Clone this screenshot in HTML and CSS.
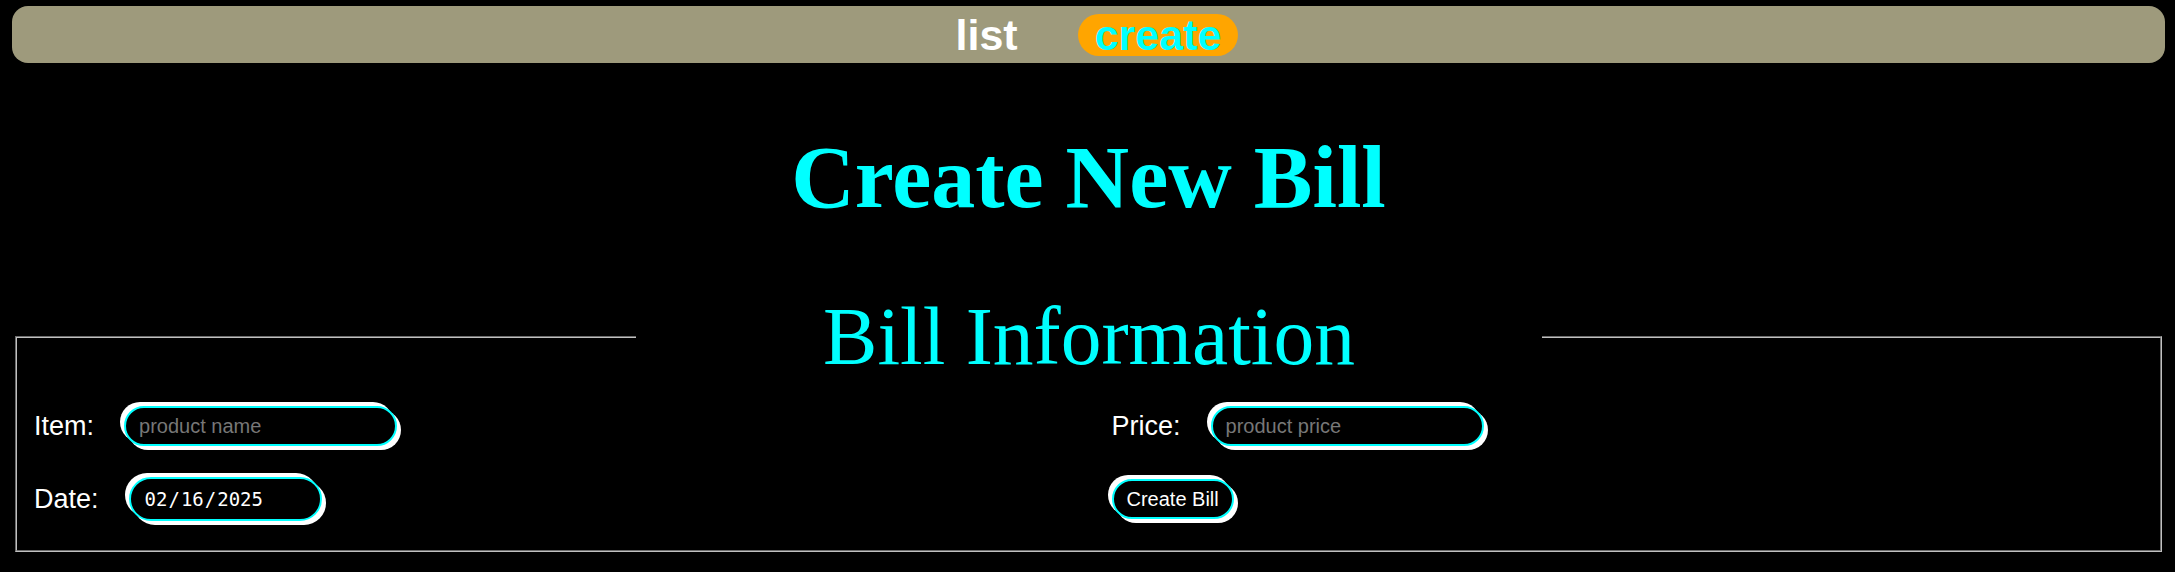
FILE: index.html
```html
<!DOCTYPE html>
<html lang="en">
<head>
<meta charset="utf-8">
<title>Create New Bill</title>
<link rel="stylesheet" href="styles.css">
</head>
<body>
<nav class="nav">
  <a class="nav-link" href="#">list</a>
  <a class="nav-link nav-link-active" href="#">create</a>
</nav>
<h1 class="title">Create New Bill</h1>
<form class="bill-form">
  <fieldset class="bill-fieldset">
    <legend class="bill-legend">Bill Information</legend>
    <div class="grid">
      <div class="field">
        <label class="field-label" for="item">Item:</label>
        <input class="pill-input text-input" id="item" type="text" placeholder="product name">
      </div>
      <div class="field">
        <label class="field-label" for="price">Price:</label>
        <input class="pill-input text-input" id="price" type="text" placeholder="product price">
      </div>
      <div class="field">
        <label class="field-label" for="date">Date:</label>
        <input class="pill-input date-input" id="date" type="date" value="2025-02-16">
      </div>
      <div class="field">
        <button class="pill-input submit-btn" type="button">Create Bill</button>
      </div>
    </div>
  </fieldset>
</form>
</body>
</html>
```
FILE: styles.css
```css
html, body {
  background: #000;
}

body {
  margin: 0;
  padding: 6px 10px 20px 12px;
  font-family: "Liberation Sans", Arial, sans-serif;
}

.nav {
  display: flex;
  justify-content: center;
  gap: 43px;
  padding: 8px 0 7px;
  background: #9e9a7c;
  border-radius: 16px;
}

.nav-link {
  display: inline-block;
  padding: 0 17px;
  height: 42px;
  line-height: 42px;
  border-radius: 21px;
  font-family: "Liberation Sans", Arial, sans-serif;
  font-weight: bold;
  font-size: 43px;
  color: #fff;
  text-decoration: none;
}

.nav-link-active {
  background: #ffa500;
  color: #00ffff;
}

.title {
  margin: 64px 0 62px;
  text-align: center;
  font-family: "Liberation Serif", "Times New Roman", serif;
  font-weight: bold;
  font-size: 88px;
  color: #00ffff;
}

.bill-form {
  margin: 0;
}

.bill-fieldset {
  margin: 0 3px;
  padding: 22px 16px 29px 17px;
  border: 2px groove #c0c0c0;
}

.bill-legend {
  margin: 0 auto;
  padding: 0 187px;
  font-family: "Liberation Serif", "Times New Roman", serif;
  font-size: 81.5px;
  color: #00ffff;
}

.grid {
  display: grid;
  grid-template-columns: 1fr 1fr;
  column-gap: 45px;
  row-gap: 31px;
  align-items: center;
}

.field {
  display: flex;
  align-items: center;
  gap: 30px;
}

.field-label {
  font-family: "Liberation Sans", Arial, sans-serif;
  font-size: 27px;
  color: #fff;
}

.pill-input {
  box-sizing: border-box;
  background: #000;
  border: 2px solid #00ffff;
  border-radius: 22px;
  box-shadow: -4px -4px 0 #fff, 4px 4px 0 #fff;
  color: #fff;
  outline: none;
  margin: 0;
}

.text-input {
  width: 273px;
  height: 40px;
  padding: 0 13px;
  font-family: "Liberation Sans", Arial, sans-serif;
  font-size: 20px;
}

.text-input::placeholder {
  color: #777;
}

.date-input {
  width: 193px;
  height: 44px;
  padding: 0 13px;
  font-family: "DejaVu Sans Mono", monospace;
  font-size: 19px;
}

.date-input::-webkit-calendar-picker-indicator {
  opacity: 0;
}

.submit-btn {
  height: 40px;
  padding: 0 13px;
  font-family: "Liberation Sans", Arial, sans-serif;
  font-size: 20px;
  cursor: pointer;
}
```
